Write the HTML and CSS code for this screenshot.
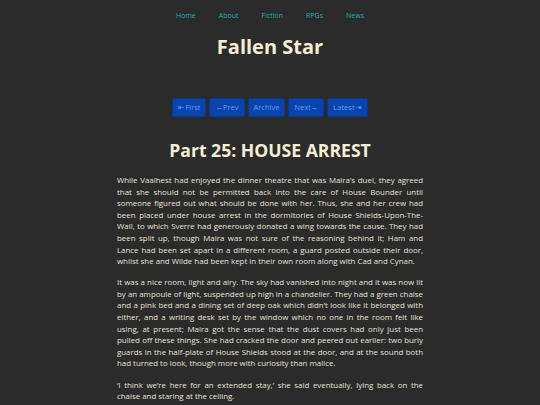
FILE: index.html
```html
<!DOCTYPE html>
<html lang="en">
<head>
<meta charset="utf-8">
<title>Fallen Star</title>
<link rel="stylesheet" href="styles.css">
</head>
<body>
<nav class="topnav">
  <a href="#">Home</a>
  <a href="#">About</a>
  <a href="#">Fiction</a>
  <a href="#">RPGs</a>
  <a href="#">News</a>
</nav>
<header class="site-title">Fallen Star</header>
<div class="pager">
  <a class="btn" href="#">&#8676;First</a>
  <a class="btn" href="#">&larr;Prev</a>
  <a class="btn" href="#">Archive</a>
  <a class="btn" href="#">Next&rarr;</a>
  <a class="btn" href="#">Latest&#8677;</a>
</div>
<main class="story">
  <h1 class="chapter">Part 25: HOUSE ARREST</h1>
  <p>While Vaalhest had enjoyed the dinner theatre that was Maira’s duel, they agreed that she should not be permitted back into the care of House Bounder until someone figured out what should be done with her. Thus, she and her crew had been placed under house arrest in the dormitories of House Shields-Upon-The-Wall, to which Sverre had generously donated a wing towards the cause. They had been split up, though Maira was not sure of the reasoning behind it; Ham and Lance had been set apart in a different room, a guard posted outside their door, whilst she and Wilde had been kept in their own room along with Cad and Cynan.</p>
  <p>It was a nice room, light and airy. The sky had vanished into night and it was now lit by an ampoule of light, suspended up high in a chandelier. They had a green chaise and a pink bed and a dining set of deep oak which didn’t look like it belonged with either, and a writing desk set by the window which no one in the room felt like using, at present; Maira got the sense that the dust covers had only just been pulled off these things. She had cracked the door and peered out earlier: two burly guards in the half-plate of House Shields stood at the door, and at the sound both had turned to look, though more with curiosity than malice.</p>
  <p>‘I think we’re here for an extended stay,’ she said eventually, lying back on the chaise and staring at the ceiling.</p>
</main>
</body>
</html>
```
FILE: styles.css
```css
html, body {
  margin: 0;
  padding: 0;
  background: #2b2b2b;
}
body {
  font-family: "Open Sans", "Noto Sans", sans-serif;
  color: #e6e1d6;
}
.topnav {
  display: flex;
  justify-content: center;
  gap: 23px;
  padding-top: 10px;
  height: 12px;
  font-size: 7px;
  line-height: 12px;
}
.topnav a {
  color: #1ab0b8;
  text-decoration: none;
}
.site-title {
  margin-top: 10px;
  text-align: center;
  font-weight: 700;
  font-size: 20px;
  line-height: 30px;
  color: #f6eed4;
}
.pager {
  display: flex;
  justify-content: center;
  gap: 3px;
  margin-top: 36px;
}
.btn {
  display: block;
  padding: 0 5px;
  height: 17px;
  line-height: 17px;
  font-size: 7.5px;
  background: #0b43ad;
  border: 1px solid #0a378f;
  border-radius: 2px;
  color: #49a6ff;
  text-decoration: none;
}
.story {
  width: 306px;
  margin: 0 auto;
}
.chapter {
  margin: 20px 0 12px;
  text-align: center;
  font-weight: 700;
  font-size: 17.6px;
  line-height: 26px;
  color: #f6eed4;
}
.story p {
  margin: 0 0 9.5px;
  font-size: 7.9px;
  line-height: 11.6px;
  text-align: justify;
}
```
